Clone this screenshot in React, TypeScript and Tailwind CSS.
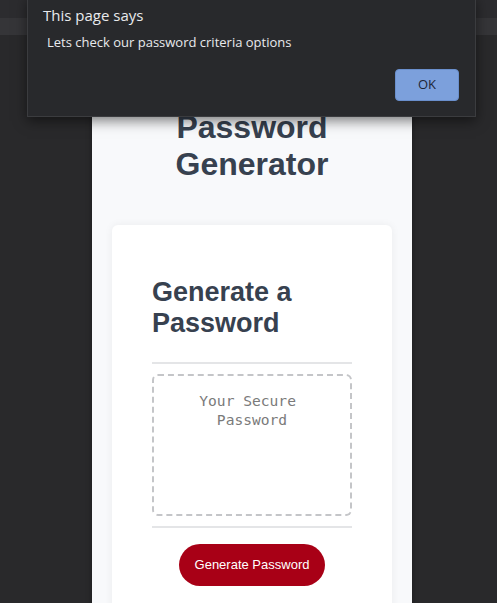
export default function App() {
  return (
    <div className="relative h-[603px] w-full overflow-hidden bg-[#29292b] font-['Liberation_Sans',Arial,sans-serif]">
      <div className="h-[18px] bg-[#2c2c2f]" />
      <div className="h-[17px] bg-[#353538]" />

      <div className="ml-[92px] w-[320px] min-h-[600px] bg-[#f8f9fb] shadow-[0_0_6px_rgba(0,0,0,0.35)]">
        <h1 className="pt-[74px] text-center text-[32px] font-bold leading-[1.15] text-[#37414f]">
          Password
          <br />
          Generator
        </h1>

        <div className="mx-5 mt-[42px] rounded-md bg-white px-10 pb-10 pt-[52px] shadow-[0_0_8px_rgba(0,0,0,0.06)]">
          <h2 className="text-[27px] font-bold leading-[31px] text-[#37414f]">
            Generate a
            <br />
            Password
          </h2>
          <div className="mt-[23px] h-[2px] bg-[#e4e5e7]" />
          <textarea
            readOnly
            placeholder={"Your Secure\u00a0 Password"}
            className="mt-[10px] block h-[142px] w-full resize-none rounded-md border-2 border-dashed border-[#c4c5c8] px-8 pt-[15px] text-center font-['DejaVu_Sans_Mono',monospace] text-[14.6px] leading-[19px] text-[#7a7a7a] outline-none placeholder:text-[#7a7a7a]"
          />
          <div className="mt-[10px] h-[2px] bg-[#e4e5e7]" />
          <div className="mt-[16px] flex justify-center">
            <button className="h-[42px] rounded-full bg-[#a80016] px-4 text-[13px] text-white">
              Generate Password
            </button>
          </div>
        </div>
      </div>

      <div className="absolute left-[27px] top-[-4px] h-[121px] w-[449px] border border-[#3b3c3f] bg-[#28292c] shadow-[0_4px_12px_rgba(0,0,0,0.5)] font-['Segoe_UI','Open_Sans',sans-serif]">
        <div className="pl-[15px] pt-[8px] text-[15px] leading-5 text-[#e8eaed]">This page says</div>
        <div className="pl-[19px] pt-[9px] text-[13px] leading-4 text-[#e8eaed]">
          Lets check our password criteria options
        </div>
        <div className="flex justify-end pr-[16px] pt-[19px]">
          <button className="h-[32px] w-[64px] rounded-[4px] border border-[#6a8fcc] bg-[#7ca0dc] text-[13px] text-[#1d2637]">
            OK
          </button>
        </div>
      </div>
    </div>
  );
}
